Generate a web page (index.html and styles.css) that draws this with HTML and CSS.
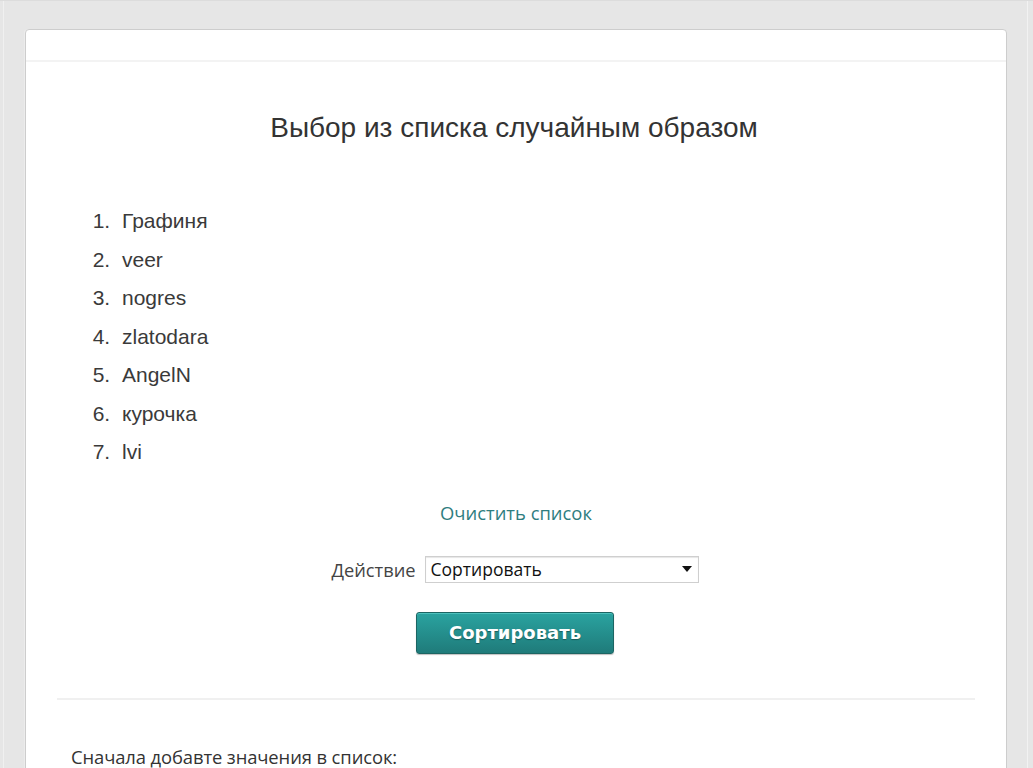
FILE: index.html
```html
<!DOCTYPE html>
<html lang="ru">
<head>
<meta charset="utf-8">
<title>Выбор из списка случайным образом</title>
<link rel="stylesheet" href="styles.css">
</head>
<body>
<div class="page">
  <div class="card">
    <div class="card-head"></div>
    <div class="card-body">
      <h1 class="title">Выбор из списка случайным образом</h1>
      <ol class="items">
        <li>Графиня</li>
        <li>veer</li>
        <li>nogres</li>
        <li>zlatodara</li>
        <li>AngelN</li>
        <li>курочка</li>
        <li>lvi</li>
      </ol>
      <div class="clear-row"><a class="clear-link" href="#">Очистить список</a></div>
      <div class="action-row">
        <span class="action-label">Действие</span>
        <div class="select">
          <span class="select-value">Сортировать</span>
          <svg class="select-arrow" width="10" height="6" viewBox="0 0 10 6"><path d="M0 0H10L5 6Z" fill="#111"/></svg>
        </div>
      </div>
      <div class="btn-row"><button class="btn">Сортировать</button></div>
      <hr class="divider">
      <p class="hint">Сначала добавте значения в список:</p>
    </div>
  </div>
  <div class="gutter"></div>
</div>
</body>
</html>
```
FILE: styles.css
```css
html, body {
  margin: 0;
  padding: 0;
  background: #e6e6e6;
  height: 100%;
  overflow: hidden;
}
body {
  border-top: 1px solid #dcdcdc;
  font-family: Arial, "Liberation Sans", sans-serif;
}
.page {
  display: flex;
  align-items: flex-start;
  padding: 28px 0 0 21px;
  border-left: 1px solid #f0f0f0;
  margin-left: 3px;
}
.card {
  width: 980px;
  background: #fff;
  border: 1px solid #cdcdcd;
  border-radius: 4px 4px 0 0;
  box-shadow: -1px 0 0 #ececec;
  min-height: 800px;
}
.card-head {
  height: 30px;
  border-bottom: 2px solid #f3f3f3;
}
.card-body {
  padding: 0 31px;
}
.title {
  margin: 50px 0 0;
  font-family: "Liberation Sans", Arial, sans-serif;
  font-weight: normal;
  font-size: 28px;
  line-height: 32px;
  color: #333;
  text-align: center;
  padding-right: 4px;
}
.items {
  margin: 58px 0 0;
  padding-left: 59px;
  font-family: "Liberation Sans", Arial, sans-serif;
  font-size: 21px;
  line-height: 38.5px;
  color: #3a3a3a;
}
.items li {
  padding-left: 6px;
}
.clear-row {
  text-align: center;
  margin-top: 28px;
}
.clear-link {
  font-family: "Open Sans", sans-serif;
  font-size: 18.4px;
  line-height: 26px;
  color: #2e7d7f;
  text-decoration: none;
}
.action-row {
  display: flex;
  justify-content: center;
  align-items: center;
  gap: 9px;
  margin-top: 30px;
  padding-right: 2px;
}
.action-label {
  font-family: "Open Sans", sans-serif;
  font-size: 18.3px;
  color: #444;
}
.select {
  height: 25px;
  border: 1px solid #cfcfcf;
  box-shadow: inset 0 1px 1px #e6e6e6;
  background: #fff;
  display: flex;
  align-items: center;
  justify-content: space-between;
  padding: 0 6px 0 5px;
  box-sizing: content-box;
  width: 261px;
}
.select-value {
  font-family: "Open Sans", sans-serif;
  font-size: 17.5px;
  color: #111;
}
.select-arrow {
  display: block;
}
.btn-row {
  text-align: center;
  margin-top: 29px;
}
.btn {
  width: 198px;
  height: 42px;
  border: 1px solid #1c6563;
  border-radius: 3px;
  background: linear-gradient(#2aa3a0, #1f7b7a);
  box-shadow: inset 0 1px 0 #4cc1bd, 0 1px 1px rgba(0,0,0,0.25);
  color: #fff;
  font-family: "DejaVu Sans", Tahoma, sans-serif;
  font-weight: bold;
  font-size: 18px;
  text-shadow: 0 1px 1px rgba(0,0,0,0.35);
  margin-left: -2px;
  display: inline-block;
  vertical-align: top;
}
.divider {
  border: 0;
  border-top: 2px solid #f0f0f0;
  margin: 44px 0 0;
}
.hint {
  margin: 46px 0 0 14px;
  font-family: "Open Sans", sans-serif;
  font-size: 18.4px;
  line-height: 22px;
  color: #333;
  letter-spacing: -0.1px;
}
.gutter {
  margin-left: 20px;
  width: 1px;
  height: 800px;
  background: #f2f2f2;
  margin-top: -28px;
}
```
